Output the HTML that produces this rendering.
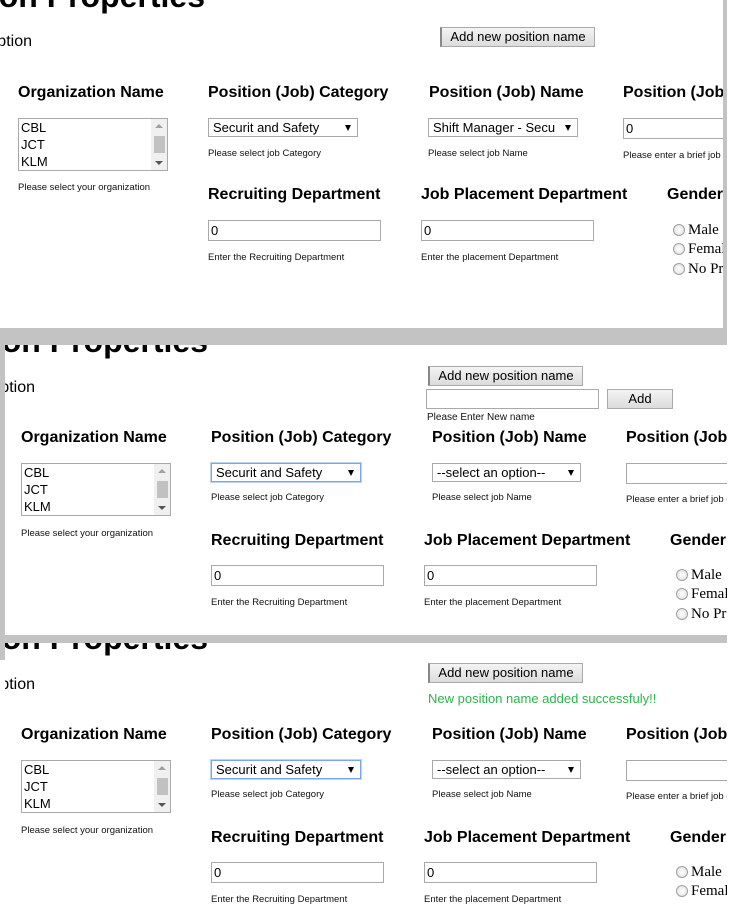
<!DOCTYPE html>
<html><head><meta charset="utf-8"><style>
*{box-sizing:border-box;margin:0;padding:0}
body{width:738px;height:905px;background:#fff;position:relative;overflow:hidden;font-family:"Liberation Sans",Arial,sans-serif;color:#000}
.clip{position:absolute;overflow:hidden;background:#fff}
.in{position:absolute;left:0;top:0;width:760px;height:400px}
.a{position:absolute;white-space:nowrap}
.title{font-size:32px;font-weight:bold;line-height:32px}
h3{position:absolute;font-size:16px;font-weight:bold;line-height:18px;white-space:nowrap;margin-top:1px}
.sm{position:absolute;font-size:9.5px;line-height:11px;white-space:nowrap;color:#111}
.sel{position:absolute;height:19px;border:1px solid #a9a9a9;font-size:13px;line-height:17px;padding-left:4px;background:#fff}
.sel:after{content:"";position:absolute;right:6px;top:6px;border-left:3.5px solid transparent;border-right:3.5px solid transparent;border-top:6px solid #000}
.foc{border:1px solid #7aa7e8;box-shadow:0 0 0 1px #bcd3f5}
.inp{position:absolute;height:21px;border:1px solid #a9a9a9;font-size:13px;line-height:19px;padding-left:2px;background:#fff}
.btn{position:absolute;height:20px;border:1px solid #aaa;border-left:2px solid #888;background:linear-gradient(#f4f4f4,#dcdcdc);font-size:13px;line-height:18px;text-align:center}
.lb{position:absolute;width:150px;height:53px;border:1px solid #a9a9a9;font-size:13px;line-height:17px;padding-left:2px}
.sb{position:absolute;right:0;top:0;width:16px;height:51px;background:#f0f0f0}
.sb i{position:absolute;left:3px;top:17px;width:11px;height:17px;background:#c1c1c1}
.sb:before{content:"";position:absolute;left:4px;top:5px;border-left:4px solid transparent;border-right:4px solid transparent;border-bottom:4px solid #a0a0a0}
.sb:after{content:"";position:absolute;left:4px;bottom:5px;border-left:4px solid transparent;border-right:4px solid transparent;border-top:4px solid #555}
.radio{position:absolute;width:12px;height:12px;border-radius:50%;border:1px solid #a0a0a0;background:radial-gradient(#fff,#ddd)}
.rl{position:absolute;font-family:"Liberation Serif",serif;font-size:15px;line-height:17px;white-space:nowrap}
.gray{position:absolute;background:#c3c3c3}
</style></head><body>

<!-- panel 1 -->
<div class="clip" style="left:0;top:0;width:723px;height:328px"><div class="in">
<div class="a title" style="right:555px;top:-20px">Position Properties</div>
<div class="a" style="right:728px;top:33px;font-size:16px">Select an option</div>
<div class="btn" style="left:440px;top:27px;width:155px">Add new position name</div>
<h3 style="left:18px;top:83px">Organization Name</h3>
<h3 style="left:208px;top:83px">Position (Job) Category</h3>
<h3 style="left:429px;top:83px">Position (Job) Name</h3>
<h3 style="left:623px;top:83px">Position (Job) Description</h3>
<div class="lb" style="left:18px;top:118px">CBL<br>JCT<br>KLM<div class="sb"><i></i></div></div>
<div class="sm" style="left:18px;top:182px">Please select your organization</div>
<div class="sel" style="left:208px;top:118px;width:150px">Securit and Safety</div>
<div class="sm" style="left:208px;top:148px">Please select job Category</div>
<div class="sel" style="left:428px;top:118px;width:150px">Shift Manager - Secu</div>
<div class="sm" style="left:428px;top:148px">Please select job Name</div>
<div class="inp" style="left:623px;top:118px;width:140px">0</div>
<div class="sm" style="left:623px;top:150px">Please enter a brief job description</div>
<h3 style="left:208px;top:185px">Recruiting Department</h3>
<h3 style="left:421px;top:185px">Job Placement Department</h3>
<h3 style="left:667px;top:185px">Gender</h3>
<div class="inp" style="left:208px;top:220px;width:173px">0</div>
<div class="sm" style="left:208px;top:252px">Enter the Recruiting Department</div>
<div class="inp" style="left:421px;top:220px;width:173px">0</div>
<div class="sm" style="left:421px;top:252px">Enter the placement Department</div>
<div class="radio" style="left:673px;top:224px"></div><div class="rl" style="left:688px;top:222px">Male</div>
<div class="radio" style="left:673px;top:243px"></div><div class="rl" style="left:688px;top:241px">Female</div>
<div class="radio" style="left:673px;top:263px"></div><div class="rl" style="left:688px;top:261px">No Preference</div>
</div></div>
<div class="gray" style="left:723px;top:0;width:4px;height:345px"></div>
<div class="gray" style="left:0;top:328px;width:727px;height:17px"></div>

<!-- panel 2 -->
<div class="clip" style="left:5px;top:345px;width:722px;height:290px"><div class="in" style="left:-2px;top:0">
<div class="a title" style="right:555px;top:-20px">Position Properties</div>
<div class="a" style="right:728px;top:34px;font-size:16px">Select an option</div>
<div class="btn" style="left:425px;top:21px;width:155px">Add new position name</div>
<div class="inp" style="left:423px;top:44px;width:173px;height:20px"></div>
<div class="btn" style="left:604px;top:44px;width:66px;border-left:1px solid #aaa">Add</div>
<div class="sm" style="left:424px;top:67px;font-size:10px">Please Enter New name</div>
<h3 style="left:18px;top:83px">Organization Name</h3>
<h3 style="left:208px;top:83px">Position (Job) Category</h3>
<h3 style="left:429px;top:83px">Position (Job) Name</h3>
<h3 style="left:623px;top:83px">Position (Job) Description</h3>
<div class="lb" style="left:18px;top:118px">CBL<br>JCT<br>KLM<div class="sb"><i></i></div></div>
<div class="sm" style="left:18px;top:183px">Please select your organization</div>
<div class="sel foc" style="left:208px;top:118px;width:150px">Securit and Safety</div>
<div class="sm" style="left:208px;top:147px">Please select job Category</div>
<div class="sel" style="left:429px;top:118px;width:149px">--select an option--</div>
<div class="sm" style="left:429px;top:147px">Please select job Name</div>
<div class="inp" style="left:623px;top:118px;width:140px"></div>
<div class="sm" style="left:623px;top:149px">Please enter a brief job description</div>
<h3 style="left:208px;top:186px">Recruiting Department</h3>
<h3 style="left:421px;top:186px">Job Placement Department</h3>
<h3 style="left:667px;top:186px">Gender</h3>
<div class="inp" style="left:208px;top:220px;width:173px">0</div>
<div class="sm" style="left:208px;top:252px">Enter the Recruiting Department</div>
<div class="inp" style="left:421px;top:220px;width:173px">0</div>
<div class="sm" style="left:421px;top:252px">Enter the placement Department</div>
<div class="radio" style="left:673px;top:224px"></div><div class="rl" style="left:688px;top:222px">Male</div>
<div class="radio" style="left:673px;top:243px"></div><div class="rl" style="left:688px;top:241px">Female</div>
<div class="radio" style="left:673px;top:263px"></div><div class="rl" style="left:688px;top:261px">No Preference</div>
</div></div>
<div class="gray" style="left:0;top:345px;width:5px;height:315px"></div>
<div class="gray" style="left:0;top:635px;width:727px;height:8px"></div>

<!-- panel 3 -->
<div class="clip" style="left:5px;top:643px;width:722px;height:262px"><div class="in" style="left:-2px;top:-1px">
<div class="a title" style="right:555px;top:-20px">Position Properties</div>
<div class="a" style="right:728px;top:34px;font-size:16px">Select an option</div>
<div class="btn" style="left:425px;top:21px;width:155px">Add new position name</div>
<div class="a" style="left:425px;top:49px;font-size:13px;color:#2cb54a">New position name added successfuly!!</div>
<h3 style="left:18px;top:83px">Organization Name</h3>
<h3 style="left:208px;top:83px">Position (Job) Category</h3>
<h3 style="left:429px;top:83px">Position (Job) Name</h3>
<h3 style="left:623px;top:83px">Position (Job) Description</h3>
<div class="lb" style="left:18px;top:118px">CBL<br>JCT<br>KLM<div class="sb"><i></i></div></div>
<div class="sm" style="left:18px;top:183px">Please select your organization</div>
<div class="sel foc" style="left:208px;top:118px;width:150px">Securit and Safety</div>
<div class="sm" style="left:208px;top:147px">Please select job Category</div>
<div class="sel" style="left:429px;top:118px;width:149px">--select an option--</div>
<div class="sm" style="left:429px;top:147px">Please select job Name</div>
<div class="inp" style="left:623px;top:118px;width:140px"></div>
<div class="sm" style="left:623px;top:149px">Please enter a brief job description</div>
<h3 style="left:208px;top:186px">Recruiting Department</h3>
<h3 style="left:421px;top:186px">Job Placement Department</h3>
<h3 style="left:667px;top:186px">Gender</h3>
<div class="inp" style="left:208px;top:220px;width:173px">0</div>
<div class="sm" style="left:208px;top:252px">Enter the Recruiting Department</div>
<div class="inp" style="left:421px;top:220px;width:173px">0</div>
<div class="sm" style="left:421px;top:252px">Enter the placement Department</div>
<div class="radio" style="left:673px;top:224px"></div><div class="rl" style="left:688px;top:222px">Male</div>
<div class="radio" style="left:673px;top:243px"></div><div class="rl" style="left:688px;top:241px">Female</div>
</div></div>
<div class="gray" style="left:0;top:643px;width:5px;height:17px"></div>
</body></html>
